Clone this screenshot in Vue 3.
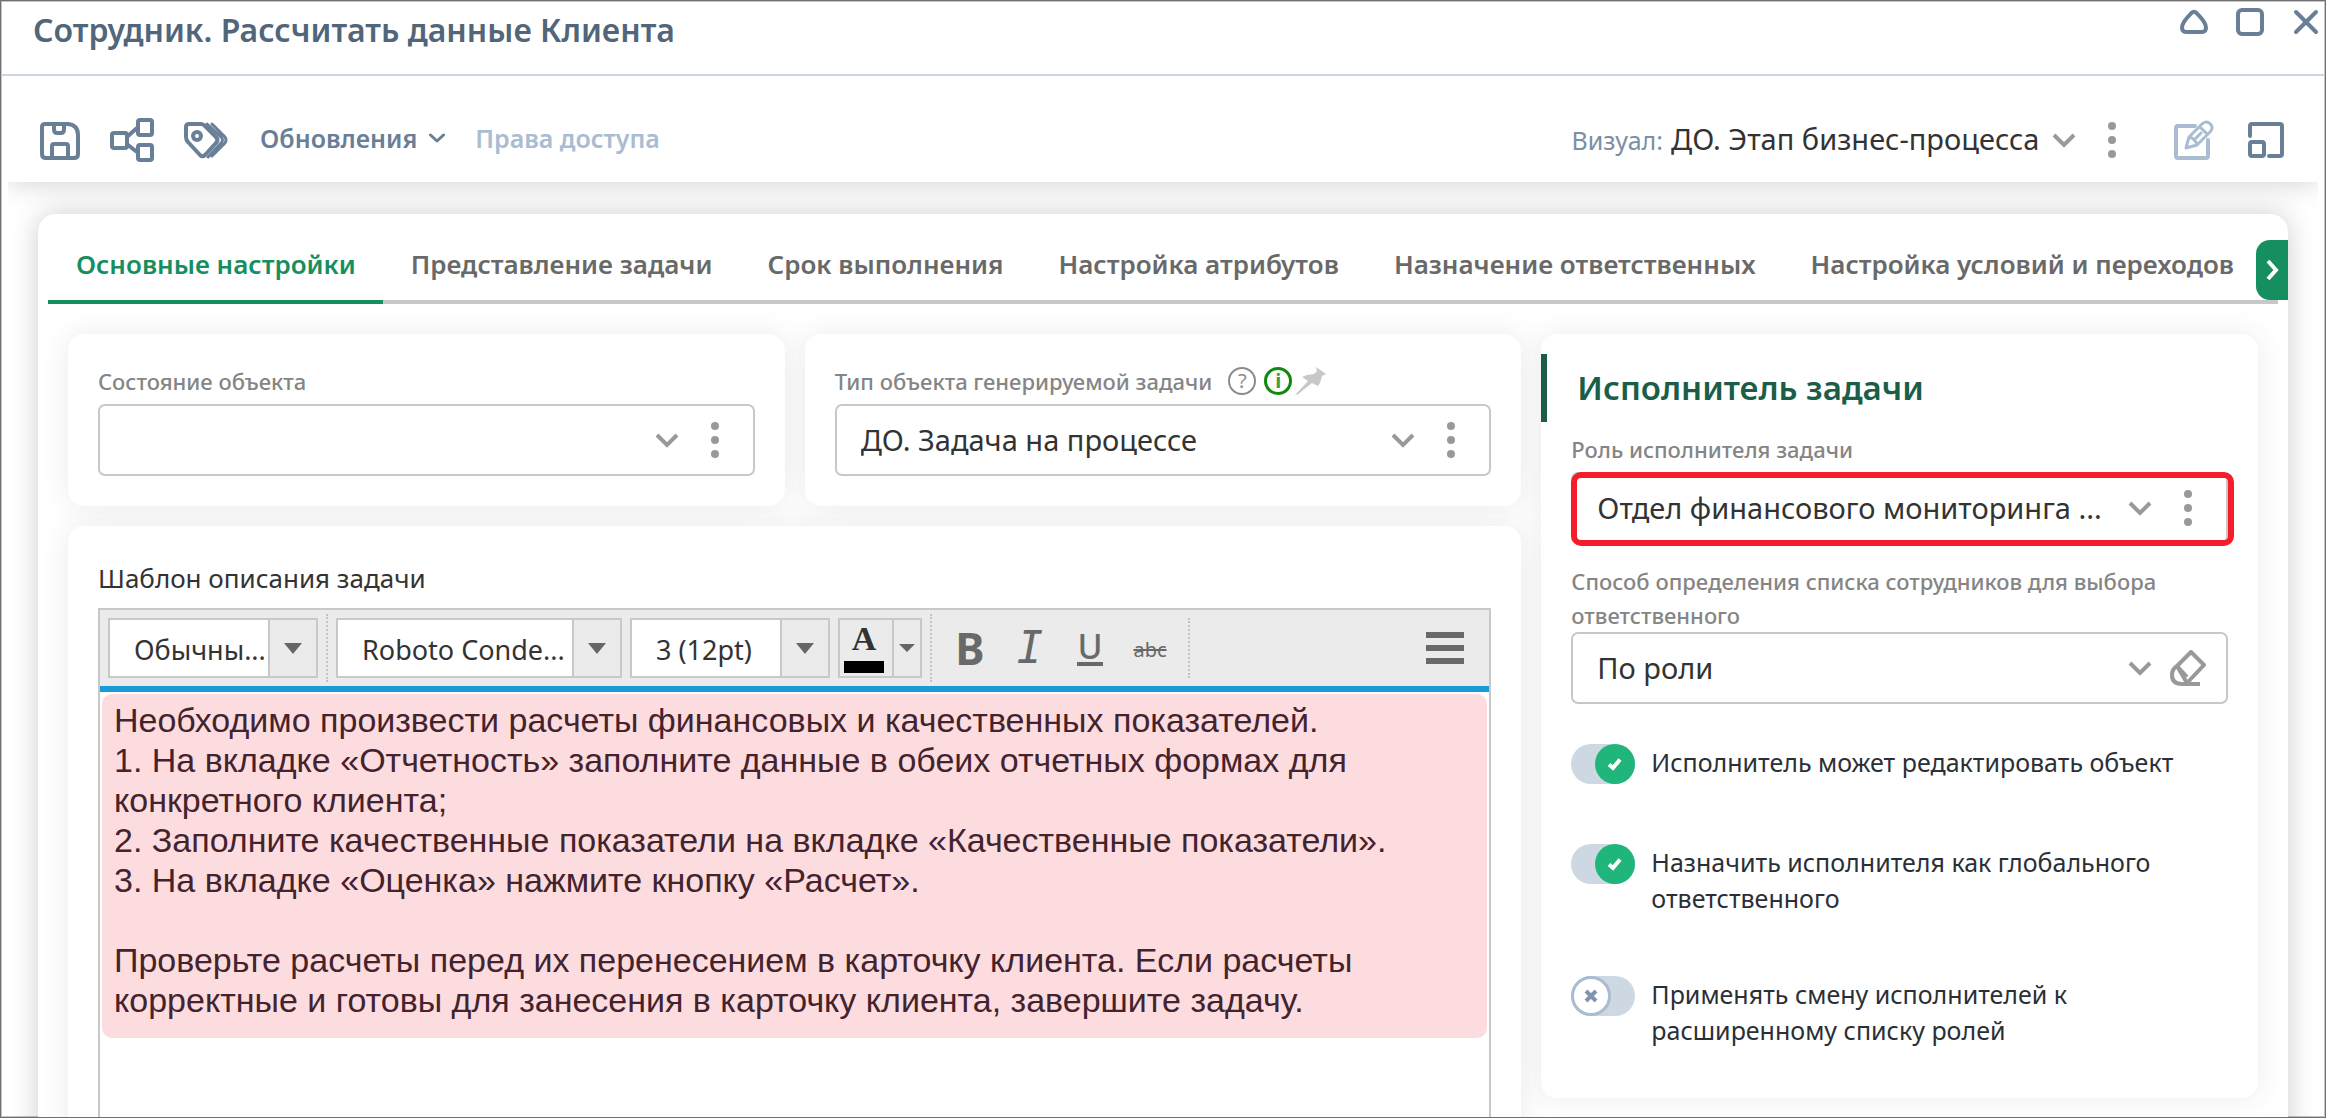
<script setup>
import { ref } from 'vue'

const tabs = [
  'Основные настройки',
  'Представление задачи',
  'Срок выполнения',
  'Настройка атрибутов',
  'Назначение ответственных',
  'Настройка условий и переходов',
]
const activeTab = ref(0)

const options = ref([
  { id: 'opt-edit', text: 'Исполнитель может редактировать объект', on: true },
  { id: 'opt-global', text: 'Назначить исполнителя как глобального ответственного', on: true },
  { id: 'opt-roles', text: 'Применять смену исполнителей к расширенному списку ролей', on: false },
])

const paragraphs = [
  'Необходимо произвести расчеты финансовых и качественных показателей.',
  '1. На вкладке «Отчетность» заполните данные в обеих отчетных формах для конкретного клиента;',
  '2. Заполните качественные показатели на вкладке «Качественные показатели».',
  '3. На вкладке «Оценка» нажмите кнопку «Расчет».',
  '',
  'Проверьте расчеты перед их перенесением в карточку клиента. Если расчеты корректные и готовы для занесения в карточку клиента, завершите задачу.',
]
</script>

<template>
  <div class="window">
    <header class="titlebar">
      <h1>Сотрудник. Рассчитать данные Клиента</h1>
      <div class="window-buttons">
        <button type="button" aria-label="Свернуть">
          <svg width="28" height="28" viewBox="0 0 28 28" class="line thick"><path d="M11.500 5Q14 2.500 16.500 5C20 8.500 26 14 26 19.500Q26 24 22 24H6Q2 24 2 19.500C2 14 8 8.500 11.500 5Z" /></svg>
        </button>
        <button type="button" aria-label="Развернуть">
          <svg width="28" height="28" viewBox="0 0 28 28" class="line thick"><rect x="2" y="2" width="24" height="24" rx="4" /></svg>
        </button>
        <button type="button" aria-label="Закрыть">
          <svg width="28" height="28" viewBox="0 0 28 28" class="line thick"><path d="M4 4l20 20M24 4l-20 20" /></svg>
        </button>
      </div>
    </header>

    <div class="toolbar">
      <div class="tools">
        <button type="button" aria-label="Сохранить">
          <svg width="40" height="40" viewBox="0 0 40 40" class="line thick"><path d="M5 4H28Q38 5 38 15V34Q38 38 34 38H6Q2 38 2 34V7Q2 4 5 4Z" /><path d="M12 38V26Q12 24 14 24H26Q28 24 28 26V38M14 4V9Q14 13 17 13H21Q24 13 24 9V4" /></svg>
        </button>
        <button type="button" aria-label="Процесс">
          <svg width="44" height="44" viewBox="0 0 44 44" class="line thick"><rect x="2" y="15" width="15" height="15" rx="2" /><rect x="28" y="2" width="14" height="15" rx="2" /><rect x="28" y="27" width="14" height="15" rx="2" /><path d="M18 18L27 10M18 27L27 34" /></svg>
        </button>
        <button type="button" aria-label="Метки">
          <svg width="44" height="40" viewBox="0 0 44 40" class="line"><path class="thick" d="M5 4H17Q19 4 21 6L32 17Q35 20 32 23L21 35Q18.500 37.500 16 35L4 22Q2 20 2 17V7Q2 4 5 4Z" /><circle class="thick" cx="13" cy="16" r="4" /><path d="M23 4L37 17Q40 20 37 23L24 37M28 4L41 17Q43 20 41 23L28 36" /></svg>
        </button>
        <button type="button" class="menu">
          Обновления
          <svg width="16" height="16" viewBox="0 0 16 16" class="line"><path d="M1.500 5L8 11L14.500 5" /></svg>
        </button>
        <button type="button" class="rights" disabled>Права доступа</button>
      </div>
      <div class="visual">
        <label for="visual">Визуал:</label>
        <select id="visual"><option>ДО. Этап бизнес-процесса</option></select>
        <svg width="24" height="24" viewBox="0 0 24 24" class="chevron"><path d="M2 7L12 17L22 7" /></svg>
        <button type="button" class="dots" aria-label="Меню визуала">
          <svg width="8" height="36" viewBox="0 0 8 36"><circle cx="4" cy="4" r="4" /><circle cx="4" cy="18" r="4" /><circle cx="4" cy="32" r="4" /></svg>
        </button>
        <button type="button" class="edit" aria-label="Редактировать">
          <svg width="40" height="40" viewBox="0 0 40 40" class="line thick pale"><path d="M21 6H4Q2 6 2 8V36Q2 38 4 38H32Q34 38 34 36V20" /><path d="M12 28L15 17L28 4Q32 0 36.500 4Q40 8 36 12L23 25ZM15 17Q21 18 23 25M26 7L33 14M22 18L27 13" class="thin" /></svg>
        </button>
        <button type="button" aria-label="Изменить размер">
          <svg width="36" height="36" viewBox="0 0 36 36" class="line thick"><path d="M2 14V4Q2 2 4 2H32Q34 2 34 4V32Q34 34 32 34H21" /><rect x="2" y="20" width="14" height="14" rx="2" /></svg>
        </button>
      </div>
    </div>

    <main class="sheet">
      <nav class="tabs" aria-label="Разделы">
        <button
          v-for="(tab, i) in tabs"
          :key="tab"
          type="button"
          :class="{ active: i === activeTab }"
          @click="activeTab = i"
        >{{ tab }}</button>
      </nav>
      <button type="button" class="next" aria-label="Следующие вкладки">
        <svg width="14" height="22" viewBox="0 0 14 22"><path d="M3 2L11 11L3 20" /></svg>
      </button>

      <div class="content">
        <section class="card">
          <div class="label-row"><label for="state">Состояние объекта</label></div>
          <div class="field">
            <select id="state"><option></option></select>
            <svg width="24" height="24" viewBox="0 0 24 24" class="chevron"><path d="M2 7L12 17L22 7" /></svg>
            <button type="button" class="dots" aria-label="Меню состояния">
              <svg width="8" height="36" viewBox="0 0 8 36"><circle cx="4" cy="4" r="4" /><circle cx="4" cy="18" r="4" /><circle cx="4" cy="32" r="4" /></svg>
            </button>
          </div>
        </section>

        <section class="card">
          <div class="label-row">
            <label for="type">Тип объекта генерируемой задачи</label>
            <span class="hint">?</span>
            <span class="hint info">i</span>
            <svg width="32" height="28" viewBox="0 0 32 28" class="pin"><path d="M20 0L30 7L26 9L24 16L22 19L16 16L1 28L0 27L12 14L6 10L11 8L18 7L21 4Z" /></svg>
          </div>
          <div class="field">
            <select id="type"><option>ДО. Задача на процессе</option></select>
            <svg width="24" height="24" viewBox="0 0 24 24" class="chevron"><path d="M2 7L12 17L22 7" /></svg>
            <button type="button" class="dots" aria-label="Меню типа">
              <svg width="8" height="36" viewBox="0 0 8 36"><circle cx="4" cy="4" r="4" /><circle cx="4" cy="18" r="4" /><circle cx="4" cy="32" r="4" /></svg>
            </button>
          </div>
        </section>

        <section class="card performer">
          <h2>Исполнитель задачи</h2>
          <div class="label-row"><label for="role">Роль исполнителя задачи</label></div>
          <div class="field marked">
            <select id="role"><option>Отдел финансового мониторинга ...</option></select>
            <svg width="24" height="24" viewBox="0 0 24 24" class="chevron"><path d="M2 7L12 17L22 7" /></svg>
            <button type="button" class="dots" aria-label="Меню роли">
              <svg width="8" height="36" viewBox="0 0 8 36"><circle cx="4" cy="4" r="4" /><circle cx="4" cy="18" r="4" /><circle cx="4" cy="32" r="4" /></svg>
            </button>
          </div>
          <label for="method" class="long-label">Способ определения списка сотрудников для выбора ответственного</label>
          <div class="field">
            <select id="method"><option>По роли</option></select>
            <svg width="24" height="24" viewBox="0 0 24 24" class="chevron"><path d="M2 7L12 17L22 7" /></svg>
            <button type="button" class="dots" aria-label="Очистить">
              <svg width="36" height="36" viewBox="0 0 36 36" class="eraser"><path d="M21 2L34 15L17 33L7 16ZM7 16Q2 19 2 25Q2 34 12 34H30M7 16L17 27" /></svg>
            </button>
          </div>
          <div class="options">
            <div v-for="o in options" :key="o.id" class="option">
              <span class="switch" :class="{ on: o.on }">
                <input :id="o.id" v-model="o.on" type="checkbox" />
                <svg width="40" height="40" viewBox="0 0 40 40">
                  <template v-if="o.on"><circle cx="20" cy="20" r="20" class="knob-on" /><path d="M14 20.500L18 24L25 15.500" class="tick" /></template>
                  <template v-else><circle cx="20" cy="20" r="18.500" class="knob-off" /><path d="M15 15L25 25M25 15L15 25" class="cross" /></template>
                </svg>
              </span>
              <label :for="o.id">{{ o.text }}</label>
            </div>
          </div>
        </section>

        <section class="card template">
          <h3>Шаблон описания задачи</h3>
          <div class="editor">
            <div class="editor-bar">
              <div class="combo style">
                <select aria-label="Стиль"><option>Обычны...</option></select><i></i>
              </div>
              <span class="sep"></span>
              <div class="combo family">
                <select aria-label="Шрифт"><option>Roboto Conde...</option></select><i></i>
              </div>
              <div class="combo size">
                <select aria-label="Размер"><option>3 (12pt)</option></select><i></i>
              </div>
              <div class="combo color">
                <button type="button" aria-label="Цвет текста"><span>A</span></button><i></i>
              </div>
              <span class="sep"></span>
              <div class="marks">
                <button type="button" class="bold">B</button>
                <button type="button" class="italic">I</button>
                <button type="button" class="underline"><span>U</span></button>
                <button type="button" class="strike">abc</button>
              </div>
              <span class="sep short"></span>
              <button type="button" class="burger" aria-label="Ещё">
                <svg width="40" height="32" viewBox="0 0 40 32"><path d="M1 0h38v6H1zM1 13h38v6H1zM1 26h38v6H1z" /></svg>
              </button>
            </div>
            <div class="editor-body">
              <div class="text" contenteditable="true">
                <p v-for="(p, i) in paragraphs" :key="i">{{ p }}</p>
              </div>
            </div>
          </div>
        </section>
      </div>
    </main>
  </div>
</template>

<style>
body {
  margin: 0;
  background: #fff;
}
</style>

<style scoped>
.window,
.window * {
  box-sizing: border-box;
}

.window {
  display: flex;
  flex-direction: column;
  height: 100vh;
  overflow: hidden;
  border: 1px solid #707070;
  box-shadow: inset 0 0 0 1px #c4c4c4;
  background: #fff;
  font-family: "Noto Sans", sans-serif;
  color: #333;
}

button,
select {
  margin: 0;
  padding: 0;
  border: 0;
  background: none;
  color: inherit;
  font: inherit;
}

select {
  appearance: none;
}

h1,
h2,
h3,
p {
  margin: 0;
}

svg {
  display: block;
  flex: none;
}

.line {
  fill: none;
  stroke: #687f97;
  stroke-width: 3;
  stroke-linecap: round;
  stroke-linejoin: round;
}

.thick {
  stroke-width: 4;
}

.pale {
  stroke: #a9bcd1;
}

.thin {
  stroke-width: 3;
}

.chevron {
  fill: none;
  stroke: #999;
  stroke-width: 4;
}

/* title bar */
.titlebar {
  display: flex;
  flex: none;
  justify-content: space-between;
  align-items: flex-start;
  padding: 7px 5px 22px 32px;
  border-bottom: 2px solid #ccd6e2;
}

.titlebar h1 {
  font-size: 32px;
  line-height: 44px;
  font-weight: 600;
  color: #52667a;
}

.window-buttons {
  display: flex;
  gap: 28px;
}

/* toolbar */
.toolbar {
  position: relative;
  z-index: 1;
  display: flex;
  flex: none;
  justify-content: space-between;
  align-items: center;
  height: 106px;
  margin: 0 7px;
  padding: 22px 34px 0 32px;
  background: #fff;
  box-shadow: 0 0 28px rgba(0, 0, 0, 0.2);
  clip-path: inset(0 0 -32px 0);
}

.tools {
  display: flex;
  align-items: center;
  gap: 30px;
  font-size: 25px;
  line-height: 36px;
  font-weight: 600;
  color: #687f97;
}

.menu {
  display: flex;
  align-items: center;
  gap: 12px;
  padding: 0 0 4px 2px;
}

.rights {
  padding-bottom: 4px;
  color: #a9bcd1;
}

.visual {
  display: flex;
  align-items: center;
}

.visual label {
  margin-right: 8px;
  font-size: 25px;
  line-height: 36px;
  color: #7b8fa5;
}

.visual select {
  margin-right: 12px;
  padding-bottom: 2px;
  font-size: 29px;
  line-height: 40px;
}

.visual .dots {
  margin: 0 42px 0 16px;
}

.edit {
  margin-right: 34px;
}

.dots {
  display: flex;
  justify-content: center;
  align-items: center;
  flex: none;
  width: 40px;
  height: 40px;
  fill: #999;
}

/* sheet with tabs */
.sheet {
  position: relative;
  flex: 1;
  margin: 32px 37px 0;
  border-radius: 18px 18px 0 0;
  background: #fff;
  box-shadow: 0 0 28px rgba(0, 0, 0, 0.2);
}

.tabs {
  display: flex;
  margin: 0 10px;
  padding-top: 26px;
  overflow: hidden;
  box-shadow: inset 0 -4px #c8c8c8;
}

.tabs button {
  flex: none;
  padding: 0 27px 12px 28px;
  border-bottom: 4px solid transparent;
  font-size: 26px;
  line-height: 48px;
  font-weight: 600;
  color: #696969;
}

.tabs .active {
  border-color: #168f60;
  color: #168f60;
}

.next {
  position: absolute;
  top: 26px;
  right: 0;
  display: flex;
  justify-content: center;
  align-items: center;
  width: 32px;
  height: 60px;
  border-radius: 14px 0 0 14px;
  background: #168f60;
}

.next path {
  fill: none;
  stroke: #fff;
  stroke-width: 4;
}

.content {
  display: grid;
  grid-template-columns: repeat(3, minmax(0, 1fr));
  grid-template-rows: auto 1fr;
  gap: 20px;
  padding: 30px;
}

.card {
  padding: 30px;
  border-radius: 16px;
  background: #fff;
  box-shadow: 0 0 28px rgba(50, 60, 70, 0.1);
}

.label-row {
  display: flex;
  align-items: center;
  height: 34px;
  margin-bottom: 6px;
}

.label-row label,
.long-label {
  font-size: 22px;
  line-height: 34px;
  font-weight: 500;
  color: #858585;
}

.long-label {
  display: block;
  margin-top: 20px;
}

.hint {
  width: 28px;
  height: 28px;
  margin-left: 8px;
  border: 2px solid #8c8c8c;
  border-radius: 50%;
  font-size: 20px;
  line-height: 24px;
  text-align: center;
  color: #8c8c8c;
}

label + .hint {
  margin-left: 16px;
}

.info {
  border: 3px solid #0f8a0f;
  line-height: 22px;
  font-weight: 700;
  color: #3d9e3d;
}

.pin {
  margin-left: 4px;
  fill: #c8c8c8;
}

.field {
  position: relative;
  display: flex;
  align-items: center;
  height: 72px;
  padding: 0 18px 0 24px;
  border: 2px solid #c8c8c8;
  border-radius: 7px;
}

.field select {
  flex: 1;
  min-width: 0;
  height: 60px;
  padding-bottom: 2px;
  font-size: 29px;
}

.field .chevron {
  margin-right: 16px;
}

.marked::after {
  content: "";
  position: absolute;
  inset: -2px -8px -4px -2px;
  border: 6px solid #f51d2a;
  border-radius: 10px;
  pointer-events: none;
}

.eraser {
  fill: none;
  stroke: #999;
  stroke-width: 4;
  stroke-linejoin: round;
}

/* performer */
.performer {
  grid-column: 3;
  grid-row: 1 / 3;
  align-self: start;
  padding: 20px 30px 50px;
}

.performer h2 {
  margin: 0 -30px 10px;
  padding-left: 30px;
  border-left: 6px solid #1b5e48;
  font-size: 33px;
  line-height: 68px;
  font-weight: 600;
  color: #1b5e48;
}

.options {
  display: grid;
  gap: 60px;
  margin-top: 40px;
}

.option {
  display: flex;
  align-items: flex-start;
  gap: 16px;
  min-height: 40px;
}

.option label {
  font-size: 25px;
  line-height: 36px;
  color: #2b2f36;
}

.switch {
  position: relative;
  flex: none;
  width: 64px;
  height: 40px;
}

.switch input {
  appearance: none;
  display: block;
  width: 64px;
  height: 40px;
  margin: 0;
  border-radius: 20px;
  background: #cdd8e3;
}

.switch svg {
  position: absolute;
  top: 0;
  left: 0;
  pointer-events: none;
}

.switch.on svg {
  left: auto;
  right: 0;
}

.knob-on {
  fill: #20b57a;
}

.knob-off {
  fill: #fff;
  stroke: #a9bcd1;
  stroke-width: 3;
}

.tick,
.cross {
  fill: none;
  stroke: #fff;
  stroke-width: 4;
}

.cross {
  stroke: #7f96ae;
}

/* template editor */
.template {
  display: flex;
  flex-direction: column;
  grid-column: 1 / 3;
  min-height: 640px;
}

.template h3 {
  margin: 4px 0 12px;
  font-size: 26px;
  line-height: 36px;
  font-weight: 400;
}

.editor {
  display: flex;
  flex: 1;
  flex-direction: column;
  border: 2px solid #c8c8c8;
}

.editor-bar {
  display: flex;
  align-items: center;
  gap: 8px;
  height: 82px;
  padding: 0 14px 0 8px;
  border-bottom: 6px solid #1a9bd9;
  background: #ebebeb;
}

.combo {
  display: flex;
  flex: none;
  height: 60px;
  border: 2px solid #c8c8c8;
}

.combo select {
  flex: 1;
  min-width: 0;
  padding: 2px 0 0 24px;
  background: #fff;
  font-size: 27px;
}

.combo i {
  display: flex;
  justify-content: center;
  align-items: center;
  width: 48px;
  border-left: 2px solid #c8c8c8;
}

.combo i::before {
  content: "";
  border: solid transparent;
  border-width: 11px 9px 0;
  border-top-color: #666;
}

.style {
  width: 210px;
}

.family {
  width: 286px;
}

.size {
  width: 200px;
}

.color {
  width: 84px;
}

.color i {
  width: 28px;
}

.color i::before {
  border-width: 8px 8px 0;
}

.color button {
  flex: 1;
  font: bold 34px/32px "Liberation Serif", serif;
}

.color span {
  display: block;
  height: 50px;
  margin: 0 8px 0 4px;
  border-bottom: 12px solid #000;
}

.sep {
  height: 68px;
  border-left: 2px dotted #c4c4c4;
}

.short {
  height: 60px;
}

.marks {
  display: flex;
  color: #696969;
}

.marks button {
  width: 60px;
  height: 60px;
}

.bold {
  font-size: 44px;
  line-height: 60px;
  font-weight: 700;
}

.italic {
  font: italic 44px/60px "DejaVu Sans Mono", monospace;
}

.underline span {
  display: inline-block;
  border-bottom: 4px solid #696969;
  font-size: 34px;
  line-height: 32px;
  font-weight: 500;
}

.marks .strike {
  padding-top: 4px;
  font-size: 20px;
  line-height: 56px;
  text-decoration: line-through;
}

.burger {
  display: flex;
  justify-content: center;
  width: 60px;
  margin-left: auto;
  fill: #696969;
}

.editor-body {
  padding: 2px;
}

.text {
  padding: 6px 10px 18px 12px;
  border-radius: 10px;
  background: #fddcdf;
  font: 34px/40px "Liberation Sans", sans-serif;
  color: #43232d;
}

.text p {
  min-height: 40px;
}
</style>
